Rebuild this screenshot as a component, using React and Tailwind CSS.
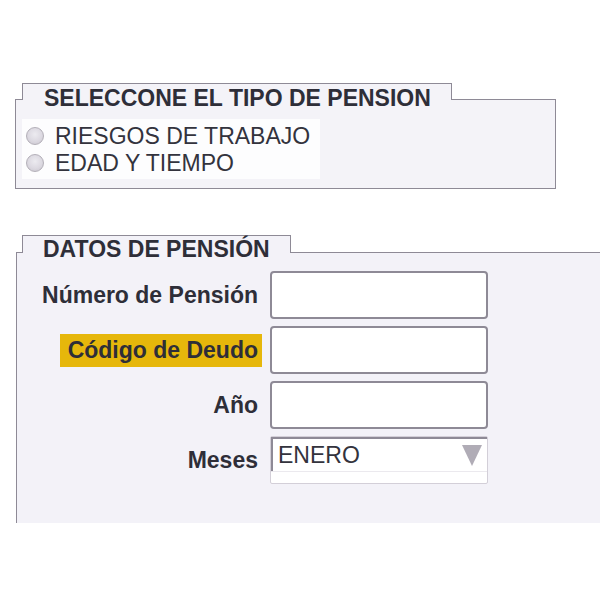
import React from "react";

function Radio() {
  return (
    <span className="inline-block w-[18px] h-[18px] rounded-full border border-[#b3afb8] bg-[radial-gradient(circle_at_50%_40%,#ecebf0_0%,#dcd9e1_55%,#c8c4cd_100%)] shrink-0" />
  );
}

function Row({ label, highlight, children }) {
  return (
    <div className="flex items-center h-[48px]">
      <div className="w-[245px] flex justify-end">
        {highlight ? (
          <span className="bg-[#e6b70b] h-[33px] w-[202px] flex items-center justify-end pr-[4px] text-[23px] font-bold text-[#2e2e38] whitespace-nowrap">
            {label}
          </span>
        ) : (
          <span className="pr-[4px] text-[23px] font-bold text-[#2e2e38] whitespace-nowrap">{label}</span>
        )}
      </div>
      <div className="ml-[8px]">{children}</div>
    </div>
  );
}

function Input() {
  return <div className="w-[218px] h-[48px] bg-white border-2 border-[#8e8a96] rounded-[4px]" />;
}

export default function App() {
  return (
    <div className="w-[600px] h-[600px] bg-white overflow-hidden font-['Liberation_Sans',Arial,sans-serif]">
      <div className="pt-[99px] pl-[15px]">
        {/* Panel 1 */}
        <div className="w-[541px] h-[90px] border border-[#8e8a96] bg-[#f4f3f8]">
          <div className="-mt-[17px] ml-[6px] w-[430px] h-[17px] border-t border-l border-r border-[#8e8a96] bg-[#f4f3f8]">
            <div className="pl-[21px] pt-[2px] leading-[24px] text-[23px] font-bold text-[#2e2e38] whitespace-nowrap">
              SELECCONE EL TIPO DE PENSION
            </div>
          </div>
          <div className="mt-[19px] ml-[6px] w-[298px] h-[60px] bg-[#fdfdfe] flex flex-col justify-center gap-[3px] pl-[4px]">
            <div className="flex items-center gap-[11px] h-[24px]">
              <Radio />
              <span className="text-[23px] text-[#33333d] leading-[24px] whitespace-nowrap">RIESGOS DE TRABAJO</span>
            </div>
            <div className="flex items-center gap-[11px] h-[24px]">
              <Radio />
              <span className="text-[23px] text-[#33333d] leading-[24px] whitespace-nowrap">EDAD Y TIEMPO</span>
            </div>
          </div>
        </div>
      </div>

      <div className="pt-[63px] pl-[16px]">
        {/* Panel 2 */}
        <div className="w-[600px] h-[271px] border-t border-l border-[#8e8a96] bg-[#f3f2f8]">
          <div className="-mt-[18px] ml-[5px] w-[269px] h-[18px] border-t border-l border-r border-[#8e8a96] bg-[#f3f2f8]">
            <div className="pl-[20px] pt-[1px] leading-[24px] text-[23px] font-bold text-[#2e2e38] whitespace-nowrap">
              DATOS DE PENSIÓN
            </div>
          </div>
          <div className="mt-[18px] flex flex-col gap-[7px]">
            <Row label="Número de Pensión"><Input /></Row>
            <Row label="Código de Deudo" highlight><Input /></Row>
            <Row label="Año"><Input /></Row>
            <Row label="Meses">
              <div className="w-[218px] h-[48px] bg-white border border-[#d3cfd8] rounded-[2px] flex flex-col">
                <div className="h-[34px] border-t-2 border-l-2 border-[#8e8a96] flex items-center justify-between pl-[5px] pr-[5px]">
                  <span className="text-[23px] text-[#33333d] leading-[24px]">ENERO</span>
                  <svg width="20" height="21" viewBox="0 0 20 21">
                    <polygon points="0,0 20,0 10,21" fill="#b0acb6" />
                  </svg>
                </div>
                <div className="flex-1 border-t border-[#ebe9ee]" />
              </div>
            </Row>
          </div>
        </div>
      </div>
    </div>
  );
}
